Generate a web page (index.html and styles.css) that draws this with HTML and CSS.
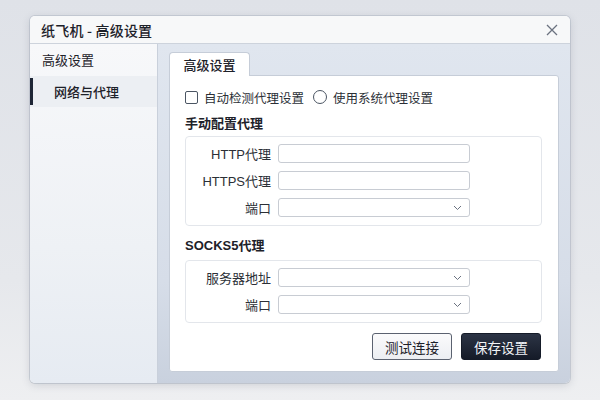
FILE: index.html
```html
<!DOCTYPE html>
<html lang="zh">
<head>
<meta charset="utf-8">
<link rel="stylesheet" href="styles.css">
</head>
<body>
<div class="window">
  <div class="titlebar">
    <span class="title">纸飞机 - 高级设置</span>
    <svg class="close" width="12" height="12" viewBox="0 0 12 12"><path d="M1 1L11 11M11 1L1 11" stroke="#6b7280" stroke-width="1.3" fill="none"/></svg>
  </div>
  <div class="body">
    <aside class="sidebar">
      <div class="nav-head">高级设置</div>
      <div class="nav-item active">网络与代理</div>
    </aside>
    <main class="content">
      <div class="tabs"><div class="tab">高级设置</div></div>
      <div class="panel">
        <div class="options">
          <label class="opt"><span class="checkbox"></span>自动检测代理设置</label>
          <label class="opt"><span class="radio"></span>使用系统代理设置</label>
        </div>
        <div class="section-title">手动配置代理</div>
        <div class="group">
          <div class="row"><span class="lbl">HTTP代理</span><span class="input"></span></div>
          <div class="row"><span class="lbl">HTTPS代理</span><span class="input"></span></div>
          <div class="row"><span class="lbl">端口</span><span class="input select"><svg width="9" height="6" viewBox="0 0 9 6"><path d="M1 1L4.5 4.5L8 1" stroke="#6b7280" stroke-width="1" fill="none"/></svg></span></div>
        </div>
        <div class="section-title s2">SOCKS5代理</div>
        <div class="group g2">
          <div class="row"><span class="lbl">服务器地址</span><span class="input select"><svg width="9" height="6" viewBox="0 0 9 6"><path d="M1 1L4.5 4.5L8 1" stroke="#6b7280" stroke-width="1" fill="none"/></svg></span></div>
          <div class="row"><span class="lbl">端口</span><span class="input select"><svg width="9" height="6" viewBox="0 0 9 6"><path d="M1 1L4.5 4.5L8 1" stroke="#6b7280" stroke-width="1" fill="none"/></svg></span></div>
        </div>
        <div class="actions">
          <button class="btn">测试连接</button>
          <button class="btn primary">保存设置</button>
        </div>
      </div>
    </main>
  </div>
</div>
</body>
</html>
```
FILE: styles.css
```css
* { box-sizing: border-box; }
html, body { margin: 0; padding: 0; }
body {
  width: 600px; height: 400px; overflow: hidden;
  background: linear-gradient(180deg, #dfe2e8 0%, #e6e8ec 70%, #eeeff1 100%);
  font-family: "Noto Sans CJK SC", "Noto Sans", sans-serif;
  color: #1f2329;
  padding: 16px 30px 0 30px;
}
.window {
  width: 540px; height: 367px;
  border-radius: 5px;
  overflow: hidden;
  background: #f6f7f9;
  box-shadow: 0 2px 8px rgba(60,70,90,0.18), 0 0 0 1px rgba(180,188,200,0.5);
  display: flex; flex-direction: column;
}
.titlebar {
  height: 28px; flex: none;
  display: flex; align-items: center; justify-content: space-between;
  padding: 0 12px 0 11px;
  background: #f7f8f9;
  border-bottom: 1px solid #cdd3dc;
}
.title { font-size: 14px; font-weight: 500; color: #1d2129; letter-spacing: 0.2px; }
.close { margin-top: 1px; }
.body { flex: 1; display: flex; min-height: 0; }
.sidebar {
  width: 128px; flex: none;
  background: linear-gradient(180deg, #f7f8fa 0%, #eef1f5 60%, #e6ebf2 100%);
  border-right: 1px solid #c9d0db;
  padding-top: 1px;
}
.nav-head { height: 31px; line-height: 30px; padding-left: 12px; font-size: 13px; color: #1d2129; }
.nav-item {
  height: 31px; line-height: 31px; padding-left: 24px; font-size: 13px; font-weight: 500;
  background: #eceff3; position: relative; color: #1d2129;
}
.nav-item.active::before {
  content: ""; position: absolute; left: 0; top: 2px; bottom: 2px; width: 3px; background: #1e2636;
}
.content {
  flex: 1;
  background: linear-gradient(180deg, #e0e6ef 0%, #d6dde8 70%, #c9d1de 100%);
  padding: 8px 10px 0 11px;
  display: flex; flex-direction: column;
}
.tabs { display: flex; height: 23px; position: relative; z-index: 1; }
.tab {
  width: 81px; height: 24px; background: #ffffff;
  border: 1px solid #c6cdd8; border-bottom: none;
  border-radius: 4px 4px 0 0;
  font-size: 13px; font-weight: 500; text-align: center; line-height: 24px; color: #1d2129;
}
.panel {
  width: 390px; height: 297px;
  background: #ffffff;
  border: 1px solid #c6cdd8;
  border-radius: 0 3px 3px 3px;
  padding: 12px 17px 0 15px;
}
.options { display: flex; align-items: center; height: 18px; font-size: 12.5px; color: #2b2f36; }
.opt { display: flex; align-items: center; margin-right: 9px; }
.checkbox { width: 13px; height: 13px; border: 1px solid #4b5563; border-radius: 2px; margin-right: 6px; }
.radio { width: 14px; height: 14px; border: 1px solid #4b5563; border-radius: 50%; margin-right: 6px; }
.section-title { font-size: 13px; font-weight: 700; color: #1d2129; margin-top: 9px; height: 18px; line-height: 18px; font-family: "Liberation Sans", "Noto Sans CJK SC", sans-serif; }
.section-title.s2 { margin-top: 11px; }
.group {
  margin-top: 3px;
  border: 1px solid #e3e6eb; border-radius: 4px;
  padding: 7px 0 8px 0;
  width: 357px;
}
.group.g2 { margin-top: 5px; }
.row { display: flex; align-items: center; height: 19px; margin-bottom: 8px; }
.row:last-child { margin-bottom: 0; }
.lbl { width: 85px; text-align: right; font-size: 13px; color: #2b2f36; margin-right: 7px; white-space: nowrap; font-family: "Liberation Sans", "Noto Sans CJK SC", sans-serif; }
.input {
  width: 192px; height: 19px;
  border: 1px solid #c8ccd3; border-radius: 3px; background: #fff;
  display: flex; align-items: center; justify-content: flex-end; padding-right: 7px;
}
.actions { display: flex; justify-content: flex-end; gap: 9px; margin-top: 10px; width: 356px; }
.btn {
  width: 80px; height: 27px; border-radius: 3px;
  font-family: "Noto Sans CJK SC", "Noto Sans", sans-serif;
  font-size: 13.5px; cursor: default;
  background: linear-gradient(180deg, #fbfbfc 0%, #eceef2 100%);
  border: 1px solid #5b6270; color: #1d2129;
}
.btn.primary {
  background: linear-gradient(180deg, #2c3445 0%, #151b28 100%);
  border: 1px solid #151b28; color: #f2f4f7;
}
```
